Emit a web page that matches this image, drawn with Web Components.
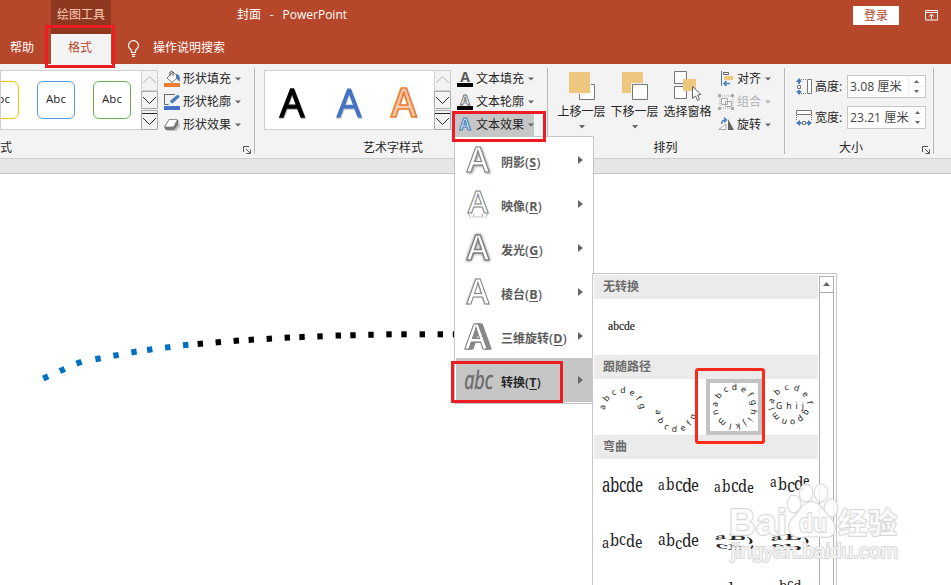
<!DOCTYPE html>
<html lang="zh-CN">
<head>
<meta charset="utf-8">
<title>封面 - PowerPoint</title>
<style>
    html, body {
        margin: 0;
        width: 951px;
        height: 585px;
        overflow: hidden;
    }

    body {
        font: 12px/16px "Open Sans", "Noto Sans CJK SC", sans-serif;
        color: #262626;
        background: #fff;
    }
</style>
</head>
<body>
<ppt-window></ppt-window>

<script>
/*
elements:
- ppt-window: the whole window, holds everything below
- title-bar: title, tabs and sign in button
- ribbon-group: label + optional data-launcher, content goes in the slot
- gallery-box: framed gallery with scroll buttons
- ribbon-button: small icon + text + dropdown arrow (data-active, data-disabled)
- ribbon-tile: large icon with the text below it (data-no-arrow)
- size-field: label and spinner (data-label, data-value)
- slide-canvas: dotted line on the slide
- effects-menu, transform-gallery: the two open menus
- red-frame: highlight frame (data-box="x y w h")
- site-watermark
*/

function define(name, html, setup) {
    const template = document.createElement("template");
    template.innerHTML = html;
    customElements.define(name, class extends HTMLElement {
        constructor() {
            super();
            this.attachShadow({ mode: "open" });
            this.shadowRoot.appendChild(template.content.cloneNode(true));
        }

        connectedCallback() {
            if (setup) {
                setup(this, this.shadowRoot);
            }
        }
    });
}

define("title-bar", `
    <style>
        :host { display: block; height: 64px; background: #b7472a; color: #fff; }
        .bar { display: grid; grid-template-columns: 51px 60px 126px 616px 46px 52px; grid-template-rows: 34px 30px; }
        .context { background: #8f3820; color: #fcc9b5; text-align: center; line-height: 29px; }
        .title { line-height: 29px; white-space: pre; word-spacing: 1.3px; }
        .login { margin-top: 6px; height: 19px; line-height: 19px; background: #fff; color: #b7472a; text-align: center; }
        .display { padding: 10px 0 0 26px; }
        .display svg { display: block; }
        .help { padding-left: 10px; line-height: 27px; }
        .active { background: #f3f3f3; color: #b7472a; text-align: center; line-height: 27px; padding-right: 2px; }
        .tell { display: flex; gap: 12px; padding: 6px 0 0 16px; grid-column: span 2; line-height: 16px; }
    </style>
    <div class="bar">
        <span></span>
        <div class="context">绘图工具</div>
        <span></span>
        <div class="title">封面  -  PowerPoint</div>
        <div class="login">登录</div>
        <div class="display"><svg width="13" height="11" fill="none" stroke="#fff"><path d="M.5.5h12v9.500h-12zM.5 2.500h12M6.500 9V4.500M4 6.500L6.500 4 9 6.500"/></svg></div>
        <div class="help">帮助</div>
        <div class="active">格式</div>
        <div class="tell">
            <svg width="14" height="18" fill="none" stroke="#fff" stroke-width="1.200"><path d="M4.500 12.500V10.500C3.500 9 1.500 8.200 1.500 5.700a5 5 0 0 1 10 0C11.500 8.200 9.500 9 8.500 10.500V12.500zM4.500 14.500h4M5 16.300h3"/></svg>
            <span>操作说明搜索</span>
        </div>
    </div>
`);

define("ribbon-group", `
    <style>
        :host { display: block; box-sizing: border-box; height: 94px; position: relative; }
        :host::after { content: ""; position: absolute; right: 0; top: 4px; width: 1px; height: 86px; background: #b8b8b8; }
        .content { display: flex; height: 76px; padding-top: 3px; box-sizing: border-box; }
        .label { text-align: center; line-height: 16px; white-space: nowrap; }
        .launcher { position: absolute; right: 4px; bottom: 4px; }
    </style>
    <div class="content"><slot></slot></div>
    <div class="label"></div>
`, (host, root) => {
    const label = root.querySelector(".label");
    label.textContent = host.dataset.label;
    label.style.paddingRight = (host.dataset.shift || 0) + "px";
    if (host.hasAttribute("data-launcher")) {
        label.insertAdjacentHTML("afterend", `<svg class="launcher" width="8" height="8" fill="none" stroke="#555"><path d="M.5 6V.5H6M3 3l4 4M7.500 3.500v4h-4"/></svg>`);
    }
});

define("gallery-box", `
    <style>
        :host { display: flex; height: 60px; box-sizing: border-box; margin-top: 3px; }
        .items { flex: 1; display: flex; box-sizing: border-box; border: solid #cfcfcf; border-width: 1px 0 1px 1px; background: #fff; overflow: hidden; }
        svg { display: block; flex: none; }
    </style>
    <div class="items"><slot></slot></div>
    <svg width="17" height="60" fill="none">
        <path fill="#f3f3f3" stroke="#cfcfcf" d="M.5.5h16v20H.5z"/>
        <path fill="#f3f3f3" stroke="#ababab" d="M.5 21.500h16v17H.5zM.5 40.500h16v19H.5z"/>
        <path stroke="#b5b5b5" d="M2 13l6.500-6.500L15 13"/>
        <path stroke="#262626" d="M2 27l6.500 6.500L15 27M2 48l6.500 6.500L15 48M1 43.500h15"/>
    </svg>
`);

define("ribbon-button", `
    <style>
        :host { display: flex; align-items: center; height: 23px; box-sizing: border-box; white-space: nowrap; }
        :host([data-disabled]) { color: #b1b1b1; }
        :host([data-active]) { background: linear-gradient(#c6c6c6, #c6c6c6) 0 0 / 85px 100% no-repeat; }
        slot { display: block; width: 19px; height: 16px; flex: none; }
        svg { margin-left: 4px; }
    </style>
    <slot></slot><span></span><svg width="6" height="4"><path d="M0 .5h6L3 3.500z" fill="#666"/></svg>
`, (host, root) => {
    root.querySelector("span").textContent = host.dataset.text;
    if (host.hasAttribute("data-disabled")) {
        root.querySelector("path").setAttribute("fill", "#b1b1b1");
    }
});

define("ribbon-tile", `
    <style>
        :host { display: flex; flex-direction: column; align-items: center; width: 53px; padding-top: 4px; box-sizing: border-box; white-space: nowrap; }
        slot { display: block; height: 33px; }
        svg { margin-top: 5px; }
        :host([data-no-arrow]) svg { display: none; }
    </style>
    <slot></slot><span></span><svg width="6" height="4"><path d="M0 0h6L3 3.500z" fill="#666"/></svg>
`, (host, root) => {
    root.querySelector("span").textContent = host.dataset.text;
});

define("size-field", `
    <style>
        :host { display: flex; height: 23px; align-items: center; white-space: nowrap; }
        slot { display: block; width: 19px; height: 17px; }
        .label { width: 32px; }
        .box { display: flex; width: 79px; height: 23px; box-sizing: border-box; border: 1px solid #c6c6c6; background: #fff; color: #444; line-height: 21px; }
        .value { flex: 1; padding-left: 2px; font-size: 12.2px; }
        .box svg { flex: none; width: 17px; }
    </style>
    <slot></slot><span class="label"></span>
    <div class="box">
        <span class="value"></span>
        <svg height="21"><path d="M0 10.500h17M.5 0v21" stroke="#f0f0f0"/><path d="M6 7h5L8.500 4zM6 14h5L8.500 17z" fill="#666"/></svg>
    </div>
`, (host, root) => {
    root.querySelector(".label").textContent = host.dataset.label;
    root.querySelector(".value").textContent = host.dataset.value;
});

define("ppt-ribbon", `
    <style>
        :host { display: flex; height: 94px; background: #f3f3f3; border-bottom: 1px solid #cfcfcf; overflow: hidden; }
        .stack { display: flex; flex-direction: column; }
        .shapes { width: 255px; }
        .shapes gallery-box { width: 158px; }
        .shapes .stack { margin-left: 6px; }
        .shape-row { display: flex; gap: 18px; margin: 10px 0 0 -20px; }
        .shape { width: 38px; height: 38px; box-sizing: border-box; border: 1px solid; border-radius: 6px; text-align: center; line-height: 33px; flex: none; }
        .shape span { color: #262626; font-size: 11.5px; }
        .wordart { width: 293px; }
        .wordart gallery-box { width: 187px; margin-left: 9px; }
        .wordart .stack { margin-left: 4px; }
        .wordart ribbon-button { padding-left: 2px; }
        .arrange { width: 237px; }
        .arrange ribbon-tile:first-of-type { margin-left: 7px; }
        .arrange .stack { margin-left: 4px; }
        .size { width: 149px; }
        .size .stack { gap: 8px; margin: 8px 0 0 11px; }
        svg { display: block; overflow: visible; }
    </style>
    <ribbon-group class="shapes" data-label="式" data-shift="243" data-launcher>
        <gallery-box>
            <div class="shape-row">
                <div class="shape" style="border-color:#ffc000"><span>Abc</span></div>
                <div class="shape" style="border-color:#5b9bd5"><span>Abc</span></div>
                <div class="shape" style="border-color:#70ad47"><span>Abc</span></div>
            </div>
        </gallery-box>
        <div class="stack">
            <ribbon-button data-text="形状填充">
                <svg width="17" height="16"><path d="M0 12h16v4H0z" fill="#ed7d31"/><path d="M3 7l6-6 5 5-6 5.500z" fill="#fff" stroke="#777"/><path d="M6 5V1q1.500-1.500 3 0v4" fill="none" stroke="#555"/><path d="M12 3q5 0 3.500 8L12 7z" fill="#487bb8"/></svg>
            </ribbon-button>
            <ribbon-button data-text="形状轮廓">
                <svg width="17" height="16"><path d="M0 12h16v4H0z" fill="#4472c4"/><path d="M11 .5H.5v10h4" fill="none" stroke="#666"/><path d="M5 10.500l1.500-4L13 1q3 0 2.500 2L9 9z" fill="#487bb8"/><path d="M5 10.500l1-3 2 2z" fill="#fff"/></svg>
            </ribbon-button>
            <ribbon-button data-text="形状效果">
                <svg width="17" height="16"><path d="M6 3h9l1 7-4 4H3l-3-4z" fill="#c4c4c4"/><path d="M5 2h7l2 1v5l-4 5H2L.5 11V9z" fill="#777"/><path d="M5.500 2.500h7q1 0 .5 1L10 9q-.5 1-1.500 1H2q-1.500 0-.5-1.500l3-5q.4-1 1-1z" fill="#fff" stroke="#777" stroke-width=".7"/></svg>
            </ribbon-button>
        </div>
    </ribbon-group>

    <ribbon-group class="wordart" data-label="艺术字样式" data-shift="17">
        <gallery-box>
            <svg width="168" height="58" font-family="Open Sans, sans-serif" font-size="39" text-anchor="middle">
                <defs><filter id="sh"><feDropShadow dx=".5" dy="1" stdDeviation=".7" flood-opacity=".35"/></filter></defs>
                <text x="27" y="45.500" stroke="#000" stroke-width="1.300" filter="url(#sh)">A</text>
                <text x="84" y="45.500" fill="#4472c4" stroke="#4472c4" stroke-width=".9" filter="url(#sh)">A</text>
                <text x="139" y="45.500" font-weight="600" fill="#f8cbad" stroke="#ed7d31" stroke-width="1.700" stroke-linejoin="round">A</text>
            </svg>
        </gallery-box>
        <div class="stack">
            <ribbon-button data-text="文本填充">
                <svg width="17" height="16"><text x="8" y="11" text-anchor="middle" font-size="14" font-weight="bold" fill="#595959">A</text><path d="M0 12h16v4H0z"/></svg>
            </ribbon-button>
            <ribbon-button data-text="文本轮廓">
                <svg width="17" height="16"><text x="8" y="10.500" text-anchor="middle" font-size="14" font-weight="bold" fill="#fff" stroke="#666" stroke-width=".8">A</text><path d="M0 12h16v4H0z"/></svg>
            </ribbon-button>
            <ribbon-button data-text="文本效果" data-active>
                <svg width="17" height="16"><text x="8" y="13" text-anchor="middle" font-size="16" font-weight="bold" fill="#e8f0f8" stroke="#4482bd" stroke-width="1.100">A</text></svg>
            </ribbon-button>
        </div>
    </ribbon-group>

    <ribbon-group class="arrange" data-label="排列" data-shift="2">
        <ribbon-tile data-text="上移一层">
            <svg width="28" height="30"><path d="M11.500 13.500h15v15h-15z" fill="#fff" stroke="#777"/><path d="M0 0h23v23H0z" fill="#f3f3f3"/><path d="M1 1h21v21H1z" fill="#eec77e"/></svg>
        </ribbon-tile>
        <ribbon-tile data-text="下移一层">
            <svg width="28" height="30"><path d="M1 1h21v21H1z" fill="#eec77e"/><path d="M10 12h18v18H10z" fill="#f3f3f3"/><path d="M11.500 13.500h15v15h-15z" fill="#fff" stroke="#777"/></svg>
        </ribbon-tile>
        <ribbon-tile data-text="选择窗格" data-no-arrow>
            <svg width="28" height="31"><path d="M.5.5h12v12H.5zM.5 15.500h12v12H.5z" fill="#fff" stroke="#777"/><path d="M9 8h13v12H9z" fill="#eec77e"/><path d="M18.500 15.500v12l3-2.500 2 4.500 2-1-2-4.500 3.500-.5z" fill="#fff" stroke="#666"/></svg>
        </ribbon-tile>
        <div class="stack">
            <ribbon-button data-text="对齐">
                <svg width="17" height="16"><path d="M3.500 0v15" stroke="#487bb8"/><path d="M5.500 1.500h5v2h-5z" fill="#fff" stroke="#666"/><path d="M6 5h9v4H6z" fill="#eec77e"/><path d="M12 12.500H6M8.500 10L6 12.500 8.500 15" fill="none" stroke="#487bb8" stroke-width="1.500"/></svg>
            </ribbon-button>
            <ribbon-button data-text="组合" data-disabled>
                <svg width="17" height="16" fill="none" stroke="#aaa"><path d="M3.500 4.500h6v6h-6zM7.500 7.500h6v5h-6z"/><path d="M2 2h13v12H2z" stroke-dasharray="1 1"/><path d="M0 0h3v3H0zM13 0h3v3h-3zM0 13h3v3H0zM13 13h3v3h-3z" fill="#aaa" stroke="none"/></svg>
            </ribbon-button>
            <ribbon-button data-text="旋转">
                <svg width="17" height="16"><path d="M.8 12.500L8 7v5.500z" fill="#fff" stroke="#aaa"/><path d="M10 2v11h6z" fill="#666"/><path d="M3.500 7q0-4 4-4M6 .5L8.500 3 6 5.500" fill="none" stroke="#487bb8" stroke-width="1.300"/></svg>
            </ribbon-button>
        </div>
    </ribbon-group>

    <ribbon-group class="size" data-label="大小" data-shift="17" data-launcher>
        <div class="stack">
            <size-field data-label="高度:" data-value="3.08 厘米">
                <svg width="17" height="17" fill="none" stroke="#777"><path d="M11.500 1.500h4v14h-4z" fill="#fff"/><path d="M5 1.500h6M5 15.500h6" stroke-dasharray="1 1"/><path d="M1.500 7.500h3v3h-3z"/><path d="M0 4l3-4 3 4H4v2H2V4zM0 13l3 4 3-4H4v-1H2v1z" fill="#487bb8" stroke="none"/></svg>
            </size-field>
            <size-field data-label="宽度:" data-value="23.21 厘米">
                <svg width="17" height="17" fill="none" stroke="#777"><path d="M.5 1.500h15v4H.5z" fill="#fff"/><path d="M.5 6v5M15.500 6v5" stroke-dasharray="1 1"/><path d="M6.500 12.500h3v3h-3z"/><path d="M4 11l-4 3 4 3v-2h1.500v-2H4zM12 11l4 3-4 3v-2h-1.500v-2H12z" fill="#487bb8" stroke="none"/></svg>
            </size-field>
        </div>
    </ribbon-group>
`);

define("slide-canvas", `
    <style>
        :host { display: block; height: 411px; background: #fff; }
        svg { display: block; }
    </style>
    <svg width="951" height="411"></svg>
`, (host, root) => {
    // x, y, angle of every dot, the first nine are blue
    const dots = [
        [45.7, 203.3, -25], [62.3, 196, -24], [79, 188.700, -20], [98, 184.700, -11], [116, 181.300, -10],
        [134, 178, -9], [149.7, 175.700, -8], [167.7, 173.300, -7], [185.7, 171, -6], [200.3, 169.700, -5],
        [218.3, 168.300, -5], [236.3, 166.700, -5], [251.3, 165.700, -4], [269.3, 164.700, -4], [287.3, 163.700, -3],
        [302, 163, -3], [320, 162.300, -2], [338.3, 161.500, -2], [353, 161.300, -1], [371, 160.700, -1],
        [389, 160.300, 0], [404, 160.300, 0], [422.3, 160.300, 0], [440.3, 160.300, 0], [455.5, 160.300, 0]
    ];
    root.querySelector("svg").innerHTML = dots.map(([x, y, angle], i) =>
        `<rect x="-2.700" y="-3" width="5.400" height="6" fill="${i < 9 ? "#0070c0" : "#000"}" transform="translate(${x} ${y}) rotate(${angle})"/>`
    ).join("");
});

define("menu-item", `
    <style>
        :host { display: flex; align-items: center; height: 44px; color: #5c5c5c; font-weight: 600; }
        :host([data-active]) { background: #c6c6c6; color: #262626; }
        .icon { display: block; width: 45px; height: 44px; flex: none; }
        .text { flex: 1; white-space: nowrap; padding-top: 6px; }
        .key { font-size: 12.5px; letter-spacing: .3px; }
        u { text-underline-offset: 2px; font-weight: 700; }
        .arrow { margin: 0 9px 0 0; }
    </style>
    <slot class="icon"></slot>
    <span class="text"></span>
    <svg class="arrow" width="5" height="8"><path d="M0 0l5 4-5 4z" fill="#666"/></svg>
`, (host, root) => {
    root.querySelector(".text").innerHTML = `${host.dataset.text}<span class="key">(<u>${host.dataset.key}</u>)</span>`;
});

define("effects-menu", `
    <style>
        :host { display: block; width: 140px; height: 268px; box-sizing: border-box; padding: 1px; border: 1px solid #c6c6c6; background: #fff; }
        svg { display: block; font: 600 34px "Open Sans", sans-serif; }
        text { fill: #fff; stroke: #808080; stroke-width: 1; text-anchor: middle; }
    </style>
    <menu-item data-text="阴影" data-key="S">
        <svg width="45" height="44"><text x="22" y="34" style="filter:drop-shadow(1px 1px 1px #999)">A</text></svg>
    </menu-item>
    <menu-item data-text="映像" data-key="R">
        <svg width="45" height="44"><defs><linearGradient id="fade" x2="0" y2="1"><stop stop-color="#fff" stop-opacity="0"/><stop offset="1" stop-color="#fff"/></linearGradient></defs><path id="mirror" d="M12.500 32l2.500 5M18 32l-1 3h10l-1-3M31.500 32L29 37" fill="none" stroke="#999"/><path d="M10 32h25v7H10z" fill="url(#fade)"/><text x="22" y="31" style="font-size:31px">A</text></svg>
    </menu-item>
    <menu-item data-text="发光" data-key="G">
        <svg width="45" height="44"><text x="22" y="34" style="stroke-width:1.300;filter:drop-shadow(0 0 1.500px #777)">A</text></svg>
    </menu-item>
    <menu-item data-text="棱台" data-key="B">
        <svg width="45" height="44"><text x="22" y="34" style="filter:drop-shadow(-1px 0 0 #d5d5d5)">A</text></svg>
    </menu-item>
    <menu-item data-text="三维旋转" data-key="D">
        <svg width="45" height="44"><text x="20" y="35" style="filter:drop-shadow(2px 0 0 #888) drop-shadow(2px 0 0 #888)">A</text></svg>
    </menu-item>
    <menu-item data-text="转换" data-key="T" data-active>
        <svg width="45" height="44"><text transform="translate(22.500 31) scale(.72 1)" style="fill:#6a6a6a;stroke:#6a6a6a;stroke-width:.5;font:italic 400 25px 'Open Sans', sans-serif">abc</text></svg>
    </menu-item>
`);

define("transform-gallery", `
    <style>
        :host { display: flex; width: 245px; height: 312px; box-sizing: border-box; padding: 1px 2px 0 1px; border: solid #c6c6c6; border-width: 1px 1px 0; background: #fff; overflow: hidden; }
        .list { width: 224px; flex: none; }
        .header { height: 24px; line-height: 24px; padding-left: 9px; box-sizing: border-box; background: #ebebeb; color: #6c6c6c; font-weight: 600; }
        .grid { display: grid; grid-template-columns: repeat(4, 56px); grid-auto-rows: 56px; }
        .selected { box-sizing: border-box; border: 4px solid #c3c3c3; }
        .selected svg { margin: -4px; }
        .scroll { display: flex; flex-direction: column; width: 15px; margin: 1px 0 0 1px; box-sizing: border-box; border: 1px solid #adadad; border-bottom: 0; }
        .up { height: 15px; border-bottom: 1px solid #adadad; }
        svg { display: block; overflow: visible; fill: #222; }
        .ring { font: 8.500px "Noto Sans", sans-serif; }
        .warp { font: 17px "Noto Serif", "Liberation Serif", serif; }
    </style>
    <div class="list">
        <div class="header">无转换</div>
        <div class="grid"><div><svg width="56" height="56"><text x="14" y="31" font-family="Liberation Serif" font-size="11.500" stroke="#222" stroke-width=".2" textLength="27" lengthAdjust="spacingAndGlyphs">abcde</text></svg></div></div>
        <div class="header">跟随路径</div>
        <div class="grid ring">
            <svg width="56" height="56">
                <path id="p1" d="M11 31a17.500 17.500 0 0 1 35 1" fill="none"/>
                <text><textPath href="#p1" textLength="53">abcdefg</textPath></text>
            </svg>
            <svg width="56" height="56">
                <path id="p2" d="M6 31a20 20 0 0 0 40 4l4-4" fill="none"/>
                <text><textPath href="#p2" textLength="62">abcdefg</textPath></text>
            </svg>
            <div class="selected"><svg width="56" height="56">
                <path id="p3" d="M11.500 28a17 17 0 1 1 34 0a17 17 0 1 1 -34 0" fill="none"/>
                <text><textPath href="#p3" textLength="104">abcdefghijklmn</textPath></text>
            </svg></div>
            <svg width="56" height="56">
                <path id="p4" d="M11.500 25a17 17 0 0 1 33.500 0l1 4" fill="none"/>
                <path id="p5" d="M43 30a16 16 0 0 1 -30 1l-1 -3" fill="none"/>
                <text><textPath href="#p4" textLength="48">abcdef</textPath></text>
                <text x="14" y="30" textLength="28">Ghij</text>
                <text><textPath href="#p5" textLength="42">qponml</textPath></text>
            </svg>
        </div>
        <div class="header">弯曲</div>
        <div class="grid warp"></div>
    </div>
    <div class="scroll"><div class="up"><svg width="13" height="14"><path d="M3 9h7L6.500 5z" fill="#666"/></svg></div></div>
`, (host, root) => {
    // font size and baseline of every letter
    const warps = [
        { sizes: [20, 20, 20, 20, 20], base: [33, 33, 33, 33, 33] },
        { sizes: [14, 16, 18, 19, 17], base: [31, 31, 32, 33, 32] },
        { sizes: [14, 16, 18, 17, 15], base: [33, 33, 33, 33, 34] },
        { sizes: [14, 17, 19, 18, 14], base: [28, 31, 33, 31, 27] },
        { sizes: [15, 17, 16, 17, 16], base: [33, 31, 30, 32, 33] },
        { sizes: [16, 17, 17, 18, 17], base: [30, 31, 34, 32, 31] }
    ];
    const xs = [8, 16, 25, 32, 41];
    const squeeze = [0.76, 0.87, 0.87, 0.87, 0.87, 0.87];
    let html = warps.map(({ sizes, base }, n) => {
        const spans = [..."abcde"].map((letter, i) =>
            `<tspan x="${xs[i] / squeeze[n]}" y="${base[i]}" font-size="${sizes[i]}">${letter}</tspan>`
        ).join("");
        return `<svg width="56" height="56"><text transform="scale(${squeeze[n]} 1)">${spans}</text></svg>`;
    }).join("");

    // cans: flattened letters, the lower half is seen from behind
    for (const shift of [0, 1]) {
        html += `<svg width="56" height="56" stroke="#222" stroke-width=".3">
            <text transform="translate(9 ${25 + shift}) rotate(-8) scale(1.500 .5)" font-size="14">a</text>
            <text transform="translate(23 25) scale(2 .5)" font-size="14">b</text>
            <path d="M41 22q7 2 5 6l-3 1q3-4-2-7z"/>
            <text transform="translate(9 32) rotate(10) scale(1.900 .5)" font-size="14">c</text>
            <text transform="translate(22 35) scale(2.100 .5)" font-size="14">b</text>
            <path d="M41 34q5-1 5-4l1 1q0 4-6 3z"/>
        </svg>`;
    }
    html += `<i></i><i></i>
        <svg width="56" height="56"><text x="23" y="22" font-size="15">b</text></svg>
        <svg width="56" height="56"><text x="17" y="20" font-size="13"><tspan y="19">b</tspan><tspan y="17">c</tspan><tspan y="19">d</tspan></text></svg>`;
    root.querySelector(".warp").innerHTML = html;
});

define("red-frame", `
    <style>
        :host { position: absolute; box-sizing: border-box; border: 3px solid #ed1c24; pointer-events: none; }
        :host([data-round]) { border-color: #fb2a1b; border-radius: 3px; }
    </style>
`, (host) => {
    const [x, y, w, h] = host.dataset.box.split(" ");
    host.style.left = x + "px";
    host.style.top = y + "px";
    host.style.width = w + "px";
    host.style.height = h + "px";
});

define("site-watermark", `
    <style>
        :host { display: block; }
        svg { display: block; font-family: "Liberation Sans", "Noto Sans CJK SC", sans-serif; }
        text, path, ellipse { fill: #fff; fill-opacity: .8; stroke: #d8d8d8; stroke-width: 2; paint-order: stroke; stroke-linejoin: round; }
    </style>
    <svg width="180" height="85">
        <text x="2" y="52" font-size="37" font-weight="bold" textLength="58" lengthAdjust="spacingAndGlyphs">Bai</text>
        <g>
            <ellipse cx="67" cy="21" rx="6.500" ry="8.500"/>
            <ellipse cx="79" cy="10" rx="6.500" ry="8.500"/>
            <ellipse cx="94" cy="10" rx="6.500" ry="8.500"/>
            <ellipse cx="104" cy="25" rx="6.500" ry="8.500"/>
            <path d="M85 19c8 0 12 10 18 16 9 9 5 20-5 19-8-1-16-1-24 0-11 1-16-10-8-19 7-7 10-16 19-16z"/>
        </g>
        <text x="72" y="49" font-size="25" font-weight="bold" textLength="28" lengthAdjust="spacingAndGlyphs">du</text>
        <text x="111" y="51" font-size="29" font-weight="bold" textLength="59">经验</text>
        <text x="4" y="75" font-size="20" textLength="167" lengthAdjust="spacingAndGlyphs">jingyan.baidu.com</text>
    </svg>
`);

define("ppt-window", `
    <style>
        :host { display: block; position: relative; width: 951px; height: 585px; overflow: hidden; }
        .strip { height: 14px; background: #e6e6e6; border-bottom: 1px solid #c6c6c6; }
        effects-menu { position: absolute; left: 454px; top: 136px; }
        transform-gallery { position: absolute; left: 592px; top: 273px; }
        site-watermark { position: absolute; left: 727px; top: 483px; }
    </style>
    <title-bar></title-bar>
    <ppt-ribbon></ppt-ribbon>
    <div class="strip"></div>
    <slide-canvas></slide-canvas>
    <effects-menu></effects-menu>
    <transform-gallery></transform-gallery>
    <red-frame data-box="45 25 70 43"></red-frame>
    <red-frame data-box="452 111 94 31"></red-frame>
    <red-frame data-box="451 361 112 42"></red-frame>
    <red-frame data-box="695 368 70 76" data-round></red-frame>
    <site-watermark></site-watermark>
`);
</script>
</body>
</html>
